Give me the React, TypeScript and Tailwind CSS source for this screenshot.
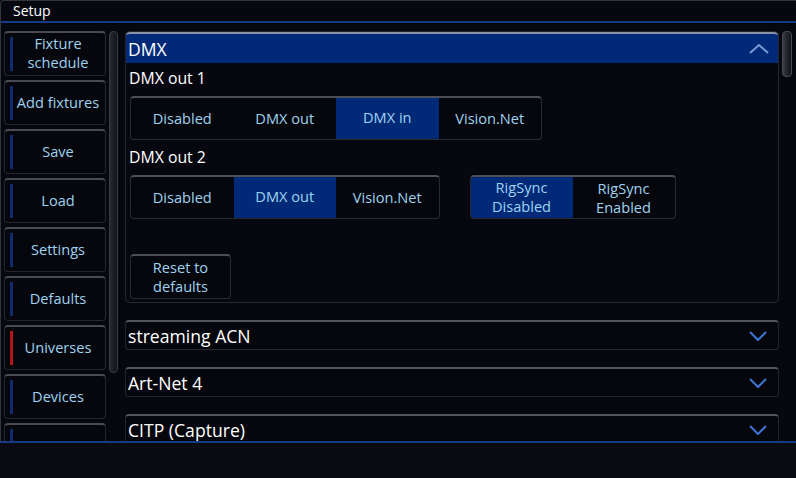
import React from "react";

const font = { fontFamily: '"Open Sans", "Noto Sans", sans-serif' };

const sideItems = [
  { label: "Fixture schedule", active: false },
  { label: "Add fixtures", active: false },
  { label: "Save", active: false },
  { label: "Load", active: false },
  { label: "Settings", active: false },
  { label: "Defaults", active: false },
  { label: "Universes", active: true },
  { label: "Devices", active: false },
  { label: "Triggers", active: false },
];

function SideButton({ label, active }: { label: string; active: boolean }) {
  return (
    <div className="flex h-[45px] shrink-0 items-center rounded-[4px] border border-[#26272d] border-t-2 border-t-[#4a4b52] bg-[#06070c]">
      <div
        className={
          "ml-[5px] h-[34px] w-[3px] shrink-0 " +
          (active ? "bg-[#b4141c]" : "bg-[#0f2c70]")
        }
      />
      <div className="-mt-[2px] flex-1 pr-[2px] text-center text-[14.6px] leading-[19px] text-[#9fd2f0]">
        {label === "Fixture schedule" ? (
          <>
            Fixture
            <br />
            schedule
          </>
        ) : (
          label
        )}
      </div>
    </div>
  );
}

function Segmented({
  items,
  selected,
  seg = 103,
}: {
  items: React.ReactNode[];
  selected: number;
  seg?: number;
}) {
  return (
    <div className="flex h-[44px] overflow-hidden rounded-[4px] border border-[#2a2b31] border-t-2 border-t-[#4e4f55] bg-[#06070c]">
      {items.map((it, i) => (
        <div
          key={i}
          style={{ width: seg }}
          className={
            "flex items-center justify-center text-center text-[14.6px] leading-[19px] text-[#9fd2f0] " +
            (i === selected ? "-mt-[2px] bg-[#002a78]" : "")
          }
        >
          {it}
        </div>
      ))}
    </div>
  );
}

function ChevronDown() {
  return (
    <svg width="18" height="10" viewBox="0 0 18 10" className="mr-[11px]">
      <path d="M1 1 L9 9 L17 1" fill="none" stroke="#3d74d6" strokeWidth="2" />
    </svg>
  );
}

function Collapsed({ title }: { title: string }) {
  return (
    <div className="flex h-[30px] shrink-0 items-center justify-between rounded-[4px] border border-[#26272d] border-t-2 border-t-[#55565c] bg-[#06070c]">
      <span className="pl-[2px] text-[17.6px] leading-[22px] text-white">{title}</span>
      <ChevronDown />
    </div>
  );
}

export default function App() {
  return (
    <div style={font} className="h-[478px] w-[796px] overflow-hidden bg-[#0a0b12]">
      <div className="flex h-[443px] flex-col rounded-tl-[4px] border-l border-t border-[#33343c] border-b-2 border-b-[#173a86] bg-[#07080f]">
        {/* Title bar */}
        <div className="h-[22px] shrink-0 border-b-2 border-[#173a86] pl-[12px] text-[14px] leading-[19px] text-white">
          Setup
        </div>

        <div className="flex min-h-0 flex-1 overflow-hidden pt-[8px]">
          {/* Sidebar */}
          <div className="ml-[3px] flex w-[102px] shrink-0 flex-col gap-[4px]">
            {sideItems.map((s) => (
              <SideButton key={s.label} label={s.label} active={s.active} />
            ))}
          </div>

          {/* Sidebar scrollbar */}
          <div className="ml-[3px] h-[342px] w-[9px] shrink-0 rounded-[4px] border border-[#3a3b42] bg-gradient-to-r from-[#2a2b31] via-[#1c1d22] to-[#131418]" />

          {/* Main */}
          <div className="ml-[7px] flex w-[654px] shrink-0 flex-col gap-[17px]">
            <div className="flex shrink-0 flex-col rounded-[4px] border border-[#26272d] pb-[3px]">
              <div className="flex h-[31px] items-center justify-between rounded-t-[4px] border-t-2 border-[#8a93a6] bg-[#002a78]">
                <span className="pl-[2px] text-[17.6px] leading-[22px] text-white">DMX</span>
                <svg width="20" height="10" viewBox="0 0 20 10" className="mr-[9px]">
                  <path d="M1 9 L10 1 L19 9" fill="none" stroke="#7a98d8" strokeWidth="2" />
                </svg>
              </div>
              <div className="flex flex-col pl-[4px]">
                <div className="-ml-[1px] mt-[5px] h-[20px] text-[15.8px] leading-[20px] text-white">DMX out 1</div>
                <div className="mt-[8px] flex">
                  <Segmented
                    items={["Disabled", "DMX out", "DMX in", "Vision.Net"]}
                    selected={2}
                    seg={102.5}
                  />
                </div>
                <div className="-ml-[1px] mt-[7px] h-[20px] text-[15.8px] leading-[20px] text-white">DMX out 2</div>
                <div className="mt-[8px] flex gap-[30px]">
                  <Segmented items={["Disabled", "DMX out", "Vision.Net"]} selected={1} seg={102.5} />
                  <Segmented
                    items={[
                      <>
                        RigSync
                        <br />
                        Disabled
                      </>,
                      <>
                        RigSync
                        <br />
                        Enabled
                      </>,
                    ]}
                    selected={0}
                    seg={102}
                  />
                </div>
                <div className="mt-[35px] flex">
                  <div className="flex h-[45px] w-[101px] items-center justify-center rounded-[4px] border border-[#2a2b31] border-t-2 border-t-[#4e4f55] bg-[#06070c] text-center text-[14.6px] leading-[19px] text-[#9fd2f0]">
                    Reset to
                    <br />
                    defaults
                  </div>
                </div>
              </div>
            </div>
            <Collapsed title="streaming ACN" />
            <Collapsed title="Art-Net 4" />
            <Collapsed title="CITP (Capture)" />
          </div>

          {/* Main scrollbar */}
          <div className="ml-[3px] h-[46px] w-[10px] shrink-0 rounded-[4px] border border-[#4a4b52] bg-gradient-to-r from-[#3a3b42] via-[#25262c] to-[#141519]" />
        </div>
      </div>
    </div>
  );
}
